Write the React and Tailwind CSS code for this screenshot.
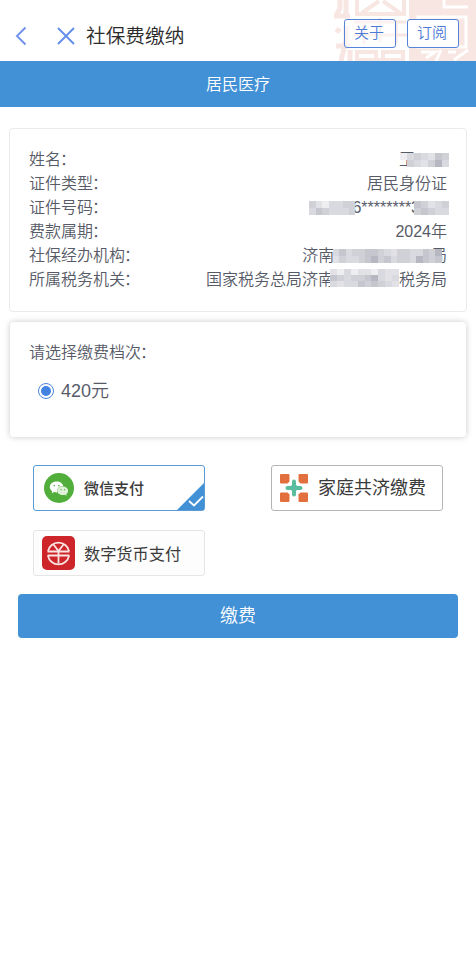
const cellTones = {
  a: "fill-[#d9dadf]",
  b: "fill-[#d0d1d7]",
  c: "fill-[#c6c7ce]",
  d: "fill-[#e2e2e6]",
  e: "fill-[#b6b7c1]",
  f: "fill-[#eeeef1]",
};

// pixelated cover for the private parts of a value
function Mosaic({ rows, cell, height, className }) {
  const cols = rows[0].length;
  const h = height / rows.length;
  return (
    <svg
      className={`relative shrink-0 ${className}`}
      width={cols * cell}
      height={height}
      shapeRendering="crispEdges"
    >
      {rows.map((row, y) =>
        row.split("").map((tone, x) =>
          tone === " " ? null : (
            <rect
              key={`${x}-${y}`}
              x={x * cell}
              y={y * h}
              width={cell}
              height={h}
              className={cellTones[tone]}
            />
          )
        )
      )}
    </svg>
  );
}

function Label({ children }) {
  return (
    <span className="flex">
      <span>{children}</span>
      <span className="-ml-px">：</span>
    </span>
  );
}

function Seal() {
  return (
    <svg
      className="absolute right-0 top-0"
      width="146"
      height="61"
      viewBox="330 0 146 61"
      fill="none"
      stroke="#f8e6e3"
      strokeWidth="4"
    >
      <path d="M409 0H476V61H409Z" fill="#f8e6e3" stroke="none" />
      <path d="M340 0v8l-4 8M346 0v16M334 16h16M336 29l4 3M346 26v14M346 40l-5 21M336 46h14M350 50v11" strokeWidth="5" />
      <path d="M357 0v14h47V0M362 13L379 1M400 13L383 1" />
      <path d="M354 22h52M354 35h54M380 18v24M364 22v22M396 22v22" strokeWidth="3" />
      <path d="M357 61V52h19v9M383 61V52h20v9M356 60h48" />
      <g stroke="#fff" strokeWidth="3">
        <path d="M444 0v7h24M418 17h48v30h-48z" />
        <path d="M421 52h14l-9 6M441 50l-5 11M448 52h8M468 50l-14 10" />
      </g>
    </svg>
  );
}

function WechatIcon() {
  return (
    <svg width="30" height="30" viewBox="0 0 30 30">
      <circle cx="15" cy="15" r="15" fill="#52ae3b" />
      <path
        d="M12.6 8.6c-3.8 0-6.8 2.4-6.8 5.5 0 1.7.9 3.2 2.4 4.2l-.5 2 2.4-1.2c.8.2 1.6.4 2.5.4h.6c-.9-3.6 2.1-6.4 6.1-6.4-.5-2.6-3.2-4.5-6.7-4.5z"
        fill="#fff"
      />
      <path
        d="M18.7 13.5c3 0 5.4 1.9 5.4 4.3 0 1.4-.7 2.5-1.9 3.3l.4 1.7-2-1c-.6.2-1.2.3-1.9.3-3 0-5.4-1.9-5.4-4.3s2.4-4.3 5.4-4.3z"
        fill="#e0f1db"
      />
      <g fill="#52ae3b">
        <circle cx="10.3" cy="12.6" r=".8" />
        <circle cx="14.9" cy="12.6" r=".8" />
        <circle cx="17" cy="16.7" r=".6" />
        <circle cx="20.6" cy="16.7" r=".6" />
      </g>
    </svg>
  );
}

function FamilyIcon() {
  return (
    <svg width="28" height="28" viewBox="0 0 28 28">
      <g fill="#e2703f">
        <path d="M1 0h7.5q1 0 1 1v6.5l-2 2H1q-1 0-1-1V1q0-1 1-1z" />
        <path d="M27 0h-7.5q-1 0-1 1v6.5l2 2H27q1 0 1-1V1q0-1-1-1z" />
        <path d="M1 28h7.5q1 0 1-1v-6.5l-2-2H1q-1 0-1 1V27q0 1 1 1z" />
        <path d="M27 28h-7.5q-1 0-1-1v-6.5l2-2H27q1 0 1 1V27q0 1-1 1z" />
      </g>
      <g fill="#5bbd9f">
        <rect x="12" y="5.5" width="4" height="17" rx="2" />
        <rect x="5.5" y="12" width="17" height="4" rx="2" />
        <circle cx="14" cy="14" r="3.4" />
      </g>
    </svg>
  );
}

function DigitalCoinIcon() {
  return (
    <svg width="33" height="34" viewBox="0 0 33 34" fill="none" stroke="#fbe3e1" strokeWidth="1.8">
      <rect width="33" height="34" rx="5" fill="#cd2529" stroke="none" />
      <path d="M6 15.2A10.7 10.7 0 0 1 27 15.2M27 19.8A10.7 10.7 0 0 1 6 19.8" />
      <path d="M11.5 8.5l5 6.5 5-6.5M5.5 15.5h22M5.5 19.5h22M16.5 14.5v13" />
    </svg>
  );
}

const info = [
  {
    label: "姓名",
    value: (
      <>
        <span>王</span>
        <Mosaic rows={["fabadcb", " badbea"]} cell={7} height={14} className="-ml-[15px] -mr-0.5" />
      </>
    ),
  },
  { label: "证件类型", value: "居民身份证" },
  {
    label: "证件号码",
    value: (
      <>
        <Mosaic rows={["bdfaabb", "acbaaab"]} cell={6.7} height={14} className="-mr-[3px]" />
        <span>6********3</span>
        <Mosaic rows={["cbdab", "bcbaa"]} cell={7} height={14} className="-ml-[6px] -mr-0.5" />
      </>
    ),
  },
  { label: "费款属期", value: "2024年" },
  {
    label: "社保经办机构",
    value: (
      <>
        <span>济南</span>
        <Mosaic
          rows={["acabbccbadbbaacbe", "dbaabcebcabbaecbc"]}
          cell={6.4}
          height={14}
          className="-ml-px -mr-[11px]"
        />
        <span>局</span>
      </>
    ),
  },
  {
    label: "所属税务机关",
    value: (
      <>
        <span>国家税务总局济南</span>
        <Mosaic
          rows={["dfafddfadd", "cbabbceada", "adaacbcbad"]}
          cell={6.9}
          height={18}
          className="-ml-[4px] -mt-1"
        />
        <span>税务局</span>
      </>
    ),
  },
];

function App() {
  return (
    <div
      lang="zh-CN"
      className="min-h-[965px] bg-white font-['Liberation_Sans','Noto_Sans_CJK_SC',sans-serif] font-[350] text-[#575b68]"
    >
      {/* Header */}
      <header className="relative flex h-[61px] items-center pl-[15px] pr-[17px] pt-[5px]">
        <Seal />
        <svg width="12" height="20" viewBox="0 0 12 20" fill="none" stroke="#7295ea" strokeWidth="2" className="mt-[5px]">
          <path d="M10.5 1.5L2 10l8.5 8.5" />
        </svg>
        <svg width="18" height="18" viewBox="0 0 18 18" fill="none" stroke="#6690ea" strokeWidth="2" className="ml-[30px] mt-[5px]">
          <path d="M1 1l16 16M17 1L1 17" />
        </svg>
        <h1 className="ml-[11px] mt-[5px] text-[19.7px] leading-7 text-[#2b2b2b]">社保费缴纳</h1>
        <div className="relative ml-auto flex gap-[11px] text-[15px] text-[#4d7bd6]">
          <button className="h-[29px] w-[52px] rounded-[3px] border border-[#5683da] bg-white/50 pr-0.5">关于</button>
          <button className="h-[29px] w-[52px] rounded-[3px] border border-[#5683da] bg-white pr-0.5">订阅</button>
        </div>
      </header>

      <div className="flex h-[46px] items-center justify-center bg-[#4290d6] pt-0.5 text-base text-white">
        居民医疗
      </div>

      {/* Taxpayer info */}
      <section className="mx-[9px] mt-[21px] h-[184px] rounded border border-[#ebebed] pl-[19px] pr-[19px] pt-[18.6px]">
        {info.map((row) => (
          <div key={row.label} className="flex h-[24.15px] items-center justify-between text-base leading-6">
            <Label>{row.label}</Label>
            <span className="flex items-center">{row.value}</span>
          </div>
        ))}
      </section>

      {/* Payment level */}
      <section className="mx-[10px] mt-[10px] h-[115px] rounded pl-[19px] pt-[19px] shadow-[0_0_6px_rgba(0,0,0,0.22)]">
        <div className="text-base leading-6">
          <Label>请选择缴费档次</Label>
        </div>
        <label className="ml-[9px] mt-[12px] flex items-center text-lg leading-7">
          <span className="mr-[7px] flex size-4 items-center justify-center rounded-full border border-[#4a86de]">
            <span className="size-[10px] rounded-full bg-[#4383e2]" />
          </span>
          420元
        </label>
      </section>

      {/* Payment methods */}
      <div className="mx-[33px] mt-[28px] grid grid-cols-[172px_172px] justify-between gap-y-[19px] text-[#3a3a3a]">
        <button className="relative flex h-[46px] items-center rounded-[3px] border border-[#5b9bd5] pl-[10px] text-[15px] font-medium">
          <WechatIcon />
          <span className="ml-[10px] mt-0.5">微信支付</span>
          <svg className="absolute bottom-0 right-0" width="27" height="27" viewBox="0 0 27 27">
            <path d="M27 0v27H0z" fill="#4290d6" />
            <path d="M12 18l5 4.5 9-9" fill="none" stroke="#fff" strokeWidth="1.8" />
          </svg>
        </button>
        <button className="flex h-[46px] items-center rounded-[3px] border border-[#b5b5b5] pl-[8px] text-lg font-normal">
          <FamilyIcon />
          <span className="ml-[10px]">家庭共济缴费</span>
        </button>
        <button className="flex h-[46px] items-center rounded-[3px] border border-[#e6e6e6] bg-[#fdfdfd] pl-[8px] text-[16.2px] font-normal">
          <DigitalCoinIcon />
          <span className="ml-[9px] mt-0.5">数字货币支付</span>
        </button>
      </div>

      <div className="mx-[18px] mt-[18px]">
        <button className="h-[44px] w-full rounded bg-[#4290d6] text-lg text-white">缴费</button>
      </div>
    </div>
  );
}

export default App;
